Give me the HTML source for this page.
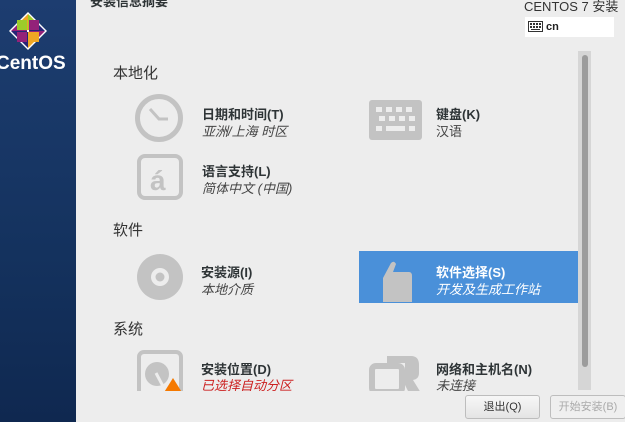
<!DOCTYPE html>
<html><head><meta charset="utf-8"><style>
*{margin:0;padding:0;box-sizing:border-box}
body{width:625px;height:422px;overflow:hidden;background:#ededed;font-family:"Liberation Sans","Noto Sans CJK SC",sans-serif;position:relative;color:#2e3436}
.side{position:absolute;left:0;top:0;width:76px;height:422px;background:linear-gradient(#1d3d70,#14325e 60%,#0f2850)}
.a{position:absolute;white-space:nowrap}
.h{font-size:15px;color:#333}
.t{font-size:13px;font-weight:bold;color:#2e3436}
.s{font-size:13px;font-style:italic;color:#444}
.clip{position:absolute;left:76px;top:0;width:549px;height:391px;overflow:hidden}
.btn{position:absolute;top:395px;height:24px;border:1px solid #bdbdbd;border-radius:3px;background:linear-gradient(#f7f7f7,#e4e4e4);font-size:11px;text-align:center;line-height:22px}
</style></head><body>
<div class="side">
<svg class="a" style="left:8px;top:11px" width="40" height="40" viewBox="0 0 40 40">
<polygon points="20,1 39,20 20,39 1,20" fill="#fff"/>
<polygon points="20,3 26,9 20,9" fill="#efa724"/>
<rect x="9" y="9" width="10" height="10" fill="#9ccd2a"/>
<rect x="21" y="9" width="10" height="10" fill="#932279"/>
<rect x="9" y="21" width="10" height="10" fill="#932279"/>
<rect x="21" y="21" width="10" height="10" fill="#efa724"/>
<polygon points="20,3 14,9 19,9 19,19 9,19 9,14 3,20 9,26 9,21 19,21 19,31 14,31 20,37 26,31 21,31 21,21 31,21 31,26 37,20 31,14 31,19 21,19 21,9 26,9" fill="none"/>
<polygon points="20,3 14,9 19,9 19,19 20,19 20,3" fill="#efa724"/>
<polygon points="20,3 26,9 21,9 21,19 20,19" fill="#9ccd2a"/>
<polygon points="3,20 9,14 9,19 19,19 19,20" fill="#932279"/>
<polygon points="3,20 9,26 9,21 19,21 19,20" fill="#262577"/>
<polygon points="37,20 31,14 31,19 21,19 21,20" fill="#262577"/>
<polygon points="37,20 31,26 31,21 21,21 21,20" fill="#932279"/>
<polygon points="20,37 14,31 19,31 19,21 20,21" fill="#262577"/>
<polygon points="20,37 26,31 21,31 21,21 20,21" fill="#efa724"/>
<rect x="19" y="19" width="2" height="2" fill="#fff"/>
</svg>
<div class="a" style="left:-4px;top:53px;font-size:19px;font-weight:bold;color:#fff">CentOS</div>
</div>
<div class="clip">
<div class="a t" style="left:14px;top:-9px">安装信息摘要</div>
<div class="a h" style="left:37px;top:62px">本地化</div>
<svg class="a" style="left:58px;top:93px" width="50" height="50"><circle cx="25" cy="25" r="21.5" fill="none" stroke="#c3c3c3" stroke-width="5"/><path d="M16 16 L25 26 L34 26" fill="none" stroke="#c3c3c3" stroke-width="3"/></svg>
<div class="a t" style="left:126px;top:104px">日期和时间(T)</div>
<div class="a s" style="left:126px;top:121px">亚洲/上海 时区</div>
<svg class="a" style="left:61px;top:154px" width="46" height="46"><rect x="2" y="2" width="42" height="42" rx="6" fill="none" stroke="#c3c3c3" stroke-width="4"/><text x="13" y="36" font-size="28" font-weight="bold" fill="#c3c3c3" font-family="Liberation Sans">á</text></svg>
<div class="a t" style="left:126px;top:161px">语言支持(L)</div>
<div class="a s" style="left:126px;top:178px">简体中文 (中国)</div>
<svg class="a" style="left:293px;top:100px" width="53" height="40"><rect width="53" height="40" rx="3" fill="#c3c3c3"/><g fill="#ededed"><rect x="7" y="7" width="6" height="5"/><rect x="17" y="7" width="6" height="5"/><rect x="27" y="7" width="6" height="5"/><rect x="37" y="7" width="6" height="5"/><rect x="10" y="16" width="6" height="5"/><rect x="20" y="16" width="6" height="5"/><rect x="30" y="16" width="6" height="5"/><rect x="40" y="16" width="6" height="5"/><rect x="7" y="26" width="6" height="5"/><rect x="17" y="26" width="19" height="5"/><rect x="40" y="26" width="6" height="5"/></g></svg>
<div class="a t" style="left:360px;top:104px">键盘(K)</div>
<div class="a s" style="left:360px;top:121px;font-style:normal">汉语</div>
<div class="a h" style="left:37px;top:219px">软件</div>
<svg class="a" style="left:60px;top:253px" width="48" height="48"><circle cx="24" cy="24" r="23" fill="#c3c3c3"/><circle cx="24" cy="24" r="9" fill="#ededed"/><circle cx="24" cy="24" r="4.5" fill="#c3c3c3"/></svg>
<div class="a t" style="left:125px;top:262px">安装源(I)</div>
<div class="a s" style="left:125px;top:279px">本地介质</div>
<div class="a" style="left:283px;top:251px;width:221px;height:52px;background:#4a90d9"></div>
<svg class="a" style="left:303px;top:260px" width="34" height="43"><path d="M4 18 L12 3 Q15 0 17 4 L14 12 L30 12 Q33 12 33 16 L33 42 L4 42 Z" fill="#c3c3c3"/></svg>
<div class="a t" style="left:360px;top:262px;color:#fff">软件选择(S)</div>
<div class="a s" style="left:360px;top:279px;color:#fff">开发及生成工作站</div>
<div class="a h" style="left:37px;top:318px">系统</div>
<svg class="a" style="left:61px;top:350px" width="46" height="42"><rect x="2" y="2" width="42" height="44" rx="5" fill="none" stroke="#c3c3c3" stroke-width="4"/><circle cx="20" cy="24" r="12" fill="#c3c3c3"/><path d="M19 23 L28 40" stroke="#ededed" stroke-width="3"/><path d="M36 28 L46 44 L26 44 Z" fill="#f57900"/></svg>
<div class="a t" style="left:125px;top:359px">安装位置(D)</div>
<div class="a s" style="left:125px;top:375px;color:#cc1f1f">已选择自动分区</div>
<svg class="a" style="left:293px;top:353px" width="52" height="40"><rect x="3" y="13" width="30" height="26" rx="4" fill="none" stroke="#c3c3c3" stroke-width="6"/><path d="M18 3 L42 3 Q50 3 50 12 L50 20 Q50 26 44 27 L52 40 L40 40 L36 32 L36 10 L18 10 Z" fill="#c3c3c3"/></svg>
<div class="a t" style="left:360px;top:359px">网络和主机名(N)</div>
<div class="a s" style="left:360px;top:375px">未连接</div>
</div>
<div class="a" style="left:578px;top:51px;width:13px;height:339px;background:#d6d6d6"></div>
<div class="a" style="left:582px;top:55px;width:6px;height:312px;background:#9c9c9c;border-radius:3px"></div>
<div class="a" style="left:524px;top:-4px;font-size:13px;color:#333">CENTOS 7 安装</div>
<div class="a" style="left:525px;top:17px;width:89px;height:20px;background:#fff"></div>
<svg class="a" style="left:528px;top:21px" width="15" height="11"><rect x="0.5" y="0.5" width="14" height="10" fill="none" stroke="#333"/><g fill="#333"><rect x="2" y="2" width="2" height="2"/><rect x="5" y="2" width="2" height="2"/><rect x="8" y="2" width="2" height="2"/><rect x="11" y="2" width="2" height="2"/><rect x="2" y="5" width="2" height="2"/><rect x="5" y="5" width="2" height="2"/><rect x="8" y="5" width="2" height="2"/><rect x="11" y="5" width="2" height="2"/><rect x="3" y="8" width="9" height="1"/></g></svg>
<div class="a" style="left:546px;top:21px;font-size:11px;font-weight:bold;color:#222">cn</div>
<div class="btn" style="left:465px;width:75px;color:#333">退出(Q)</div>
<div class="btn" style="left:550px;width:76px;color:#aaa;background:#efefef">开始安装(B)</div>
</body></html>
